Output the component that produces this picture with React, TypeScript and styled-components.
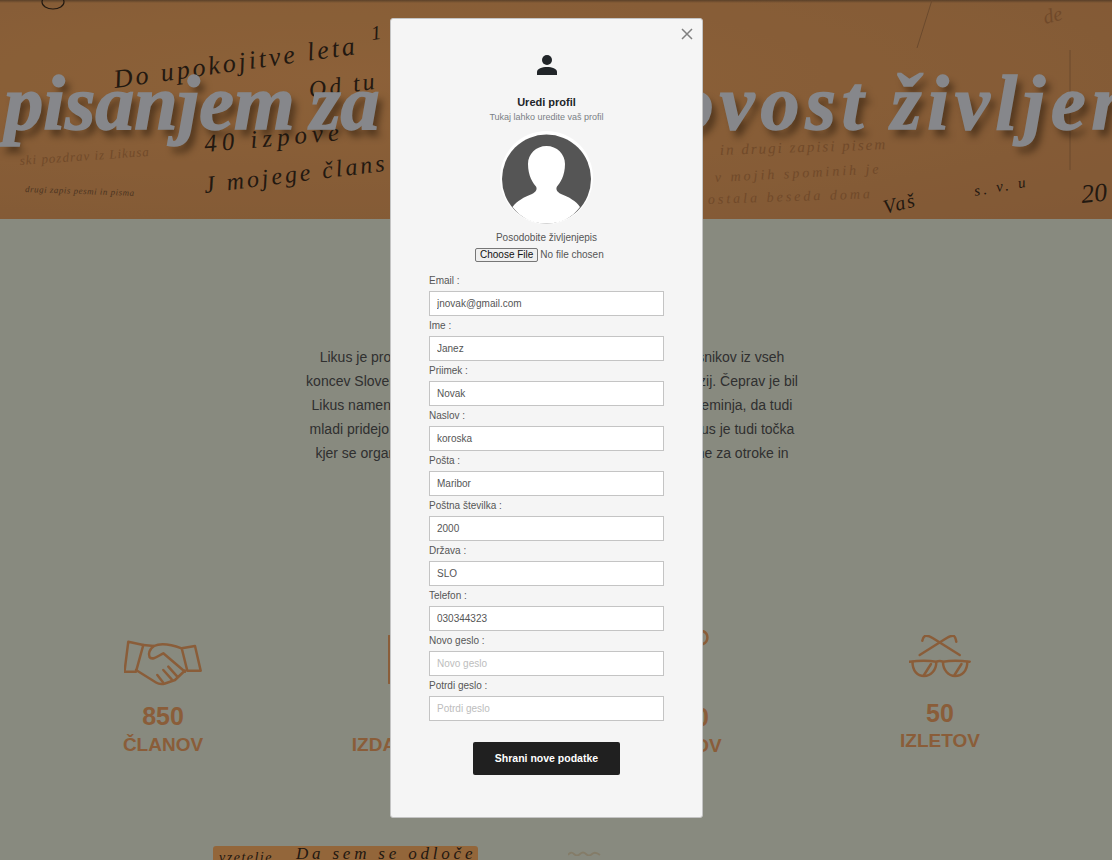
import React from "react";
import styled, { createGlobalStyle } from "styled-components";

const Global = createGlobalStyle`
  html, body { margin: 0; padding: 0; height: 860px; overflow: hidden; background: #e3e6d4; }
  * { box-sizing: border-box; }
  body { font-family: "Liberation Sans", Arial, sans-serif; }
`;

const Page = styled.div`
  width: 1112px;
  height: 860px;
  overflow: hidden;
  background: #e3e6d4;
`;

const Banner = styled.header`
  position: relative;
  height: 219px;
  overflow: hidden;
  display: flex;
  justify-content: center;
  background:
    linear-gradient(180deg, rgba(60, 50, 40, 0.45) 0, rgba(60, 50, 40, 0) 3px),
    radial-gradient(ellipse at 30% 35%, #eaa25f 0, #e29c5c 45%, #d8945a 100%);
`;

const Scribbles = styled.svg`
  position: absolute;
  inset: 0;
  width: 100%;
  height: 100%;
`;

const Slogan = styled.h1`
  position: relative;
  flex: none;
  margin: 58px 0 0 47px;
  font-family: "Liberation Serif", serif;
  font-style: italic;
  font-weight: 700;
  font-size: 78px;
  line-height: 90px;
  word-spacing: -4px;
  white-space: nowrap;
  color: #dfe2e8;
  -webkit-text-stroke: 1.5px #dfe2e8;
  text-shadow: 5px 7px 7px rgba(50, 30, 10, 0.5);
`;

const SloganWide = styled.span`
  letter-spacing: 6px;
`;

const Intro = styled.section`
  padding: 126px 8px 0 0;
  text-align: center;
  font-size: 14px;
  line-height: 24px;
  color: #505050;
`;

const Line = styled.div`
  white-space: nowrap;
`;

const Stats = styled.section`
  display: flex;
  align-items: flex-start;
  margin-top: 165px;
  padding-left: 33.5px;
`;

const Stat = styled.div<{ $top: number }>`
  flex: none;
  width: 259px;
  margin-top: ${(p) => p.$top}px;
  display: flex;
  flex-direction: column;
  align-items: center;
  color: #e69c60;
`;

const StatIcon = styled.svg`
  display: block;
  fill: none;
  stroke: #e69c60;
  stroke-width: 2.5;
  stroke-linecap: round;
  stroke-linejoin: round;
`;

const StatNumber = styled.div<{ $gap: number }>`
  margin-top: ${(p) => p.$gap}px;
  font-size: 25px;
  line-height: 30px;
  font-weight: 700;
`;

const StatLabel = styled.div<{ $gap?: number }>`
  margin-top: ${(p) => p.$gap ?? 3}px;
  font-size: 19px;
  line-height: 22px;
  font-weight: 700;
`;

const Bottom = styled.section`
  display: flex;
  align-items: flex-start;
  margin-top: 89px;
  padding-left: 213px;
`;

const Tile = styled.div`
  width: 265px;
  height: 60px;
  border-radius: 3px;
  overflow: hidden;
  background: #f5aa62;
`;

const TileArt = styled.svg`
  display: block;
`;

const Squiggle = styled.svg`
  display: block;
  margin: 5px 0 0 90px;
  fill: none;
  stroke: #dccfae;
  stroke-width: 1.8;
`;

const Backdrop = styled.div`
  position: fixed;
  inset: 0;
  display: flex;
  justify-content: center;
  align-items: flex-start;
  padding: 18px 19px 0 0;
  background: rgba(0, 0, 0, 0.4);
`;

const Modal = styled.div`
  position: relative;
  width: 313px;
  height: 800px;
  display: flex;
  flex-direction: column;
  align-items: center;
  padding-top: 36px;
  background: #f5f5f5;
  border: 1px solid #c4c4c4;
  border-radius: 3px;
`;

const Close = styled.button`
  position: absolute;
  top: 8px;
  right: 8px;
  width: 14px;
  height: 14px;
  padding: 0;
  border: 0;
  background: none;
  color: #808080;
  display: flex;
`;

const TitleIcon = styled.svg`
  display: block;
  fill: #212529;
`;

const Title = styled.h2`
  margin: 20px 0 0;
  font-size: 11px;
  line-height: 14px;
  font-weight: 700;
  color: #212529;
`;

const Subtitle = styled.p`
  margin: 2px 0 0;
  font-size: 9px;
  line-height: 13px;
  color: #7a7f85;
`;

const Avatar = styled.svg`
  display: block;
  margin-top: 7px;
`;

const ResumeLabel = styled.div`
  margin-top: 7px;
  font-size: 10px;
  line-height: 13px;
  color: #555;
`;

const FileInput = styled.input`
  display: block;
  width: 143px;
  margin: 4px 0 0 0;
  padding: 0;
  font-family: "Liberation Sans", Arial, sans-serif;
  font-size: 10px;
  line-height: 12px;
  color: #555;
  &::file-selector-button {
    font: inherit;
    color: #111;
    margin-right: 2px;
    padding: 0 4px;
    height: 14px;
    background: #efefef;
    border: 1px solid #767676;
    border-radius: 2px;
  }
`;

const Form = styled.form`
  width: 235px;
  margin-top: 9px;
  display: flex;
  flex-direction: column;
  align-items: stretch;
`;

const Label = styled.label`
  display: block;
  height: 20px;
  font-size: 10px;
  line-height: 20px;
  color: #555;
`;

const Input = styled.input`
  display: block;
  width: 100%;
  height: 25px;
  padding: 0 7px;
  font-family: "Liberation Sans", Arial, sans-serif;
  font-size: 10px;
  color: #555;
  background: #fff;
  border: 1px solid #c4c4c4;
  border-radius: 0;
  outline: none;
  &::placeholder {
    color: #bdbdbd;
    opacity: 1;
  }
`;

const Save = styled.button`
  align-self: center;
  width: 147px;
  height: 33px;
  margin-top: 21px;
  padding: 0 0 2px;
  font-family: "Liberation Sans", Arial, sans-serif;
  font-size: 10.5px;
  font-weight: 700;
  color: #fff;
  background: #202020;
  border: 0;
  border-radius: 2px;
`;

const fields = [
  { label: "Email :", value: "jnovak@gmail.com" },
  { label: "Ime :", value: "Janez" },
  { label: "Priimek :", value: "Novak" },
  { label: "Naslov :", value: "koroska" },
  { label: "Pošta :", value: "Maribor" },
  { label: "Poštna številka :", value: "2000" },
  { label: "Država :", value: "SLO" },
  { label: "Telefon :", value: "030344323" },
  { label: "Novo geslo :", placeholder: "Novo geslo" },
  { label: "Potrdi geslo :", placeholder: "Potrdi geslo" },
];

const inkDark = { fontFamily: "'Liberation Serif', serif", fontStyle: "italic", fill: "#3a2a1c" } as const;
const inkFaint = { fontFamily: "'Liberation Serif', serif", fontStyle: "italic", fill: "#b0713f", opacity: 0.75 } as const;

export default function App() {
  return (
    <>
      <Global />
      <Page>
        <Banner>
          <Scribbles viewBox="0 0 1112 219">
            <text {...inkDark} fontSize="26" transform="translate(115 88) rotate(-8)" letterSpacing="3">Do upokojitve leta</text>
            <text {...inkDark} fontSize="24" transform="translate(310 98) rotate(-8)" letterSpacing="3">Od tu</text>
            <text {...inkDark} fontSize="25" transform="translate(205 152) rotate(-5)" letterSpacing="5">40 izpove</text>
            <text {...inkDark} fontSize="24" transform="translate(205 193) rotate(-7)" letterSpacing="3">J mojege člans</text>
            <text {...inkDark} fontSize="20" transform="translate(372 40) rotate(-8)">1</text>
            <text {...inkFaint} fontSize="13" transform="translate(20 165) rotate(-4)" letterSpacing="1">ski pozdrav iz Likusa</text>
            <text {...inkDark} fontSize="9" opacity="0.6" transform="translate(25 192) rotate(2)" letterSpacing="0.5">drugi zapis pesmi in pisma</text>
            <text {...inkFaint} fontSize="15" transform="translate(720 155) rotate(-2)" letterSpacing="2">in drugi zapisi pisem</text>
            <text {...inkFaint} fontSize="14" transform="translate(715 182) rotate(-3)" letterSpacing="3">v mojih spominih je</text>
            <text {...inkFaint} fontSize="14" transform="translate(708 204) rotate(-2)" letterSpacing="3">ostala beseda doma</text>
            <text {...inkDark} fontSize="20" transform="translate(885 214) rotate(-14)" letterSpacing="2">Vaš</text>
            <text {...inkDark} fontSize="15" transform="translate(975 196) rotate(-10)" letterSpacing="3">s. v. u</text>
            <text {...inkDark} fontSize="26" transform="translate(1082 203) rotate(-6)">20</text>
            <text {...inkFaint} fontSize="20" transform="translate(1045 24) rotate(-14)">de</text>
            <path d="M1070 50V170M932 0L917 48" stroke="#b27b4c" strokeWidth="1" fill="none" />
            <ellipse cx="53" cy="2" rx="11" ry="7" fill="none" stroke="#3a2a1c" strokeWidth="1.2" />
          </Scribbles>
          <Slogan>
            S pisanjem za višjo kak<SloganWide>ovost življenja</SloganWide>
          </Slogan>
        </Banner>

        <Intro>
          <Line>Likus je prostovoljno združenje literarnih ustvarjalcev ter dopisnikov iz vseh</Line>
          <Line>koncev Slovenije, ki se srečujejo na srečanjih in skupnih ekskurzij. Čeprav je bil</Line>
          <Line>Likus namenjen predvsem starim, pa se ta slika v tem času spreminja, da tudi</Line>
          <Line>mladi pridejo med nas in podelijo svoje izkušnje s pisanjem. Likus je tudi točka</Line>
          <Line>kjer se organizirajo literarni večeri in pisne delavnice namenjene za otroke in</Line>
        </Intro>

        <Stats>
          <Stat $top={10}>
            <StatIcon width="78" height="47" viewBox="0 0 78 47">
              <path d="M4.3 1.7L19.3 5L12 31.7H0.5Z" />
              <path d="M57.7 8.3L71 6L76.7 30.7H63.3Z" />
              <path d="M19.3 5L30 6Q39 1.5 57.7 8.3" />
              <path d="M12 30L32 42.5Q36 45 41 43.5L51 40L61 30.5" />
              <path d="M30 6C25.5 9 24 14 25.5 17C28 21 34 16 39.3 13.3L61 31.7" />
              <path d="M33.3 35L39.3 42.7M39.3 30L47.7 39.3M44.3 26.7L53.3 36.7" />
            </StatIcon>
            <StatNumber $gap={14}>850</StatNumber>
            <StatLabel>ČLANOV</StatLabel>
          </Stat>
          <Stat $top={5}>
            <StatIcon width="68" height="49" viewBox="0 0 68 49">
              <path d="M1.2 1V48H66V1" />
              <path d="M34 6V48" />
            </StatIcon>
            <StatNumber $gap={17}>120</StatNumber>
            <StatLabel>IZDANIH KNJIG</StatLabel>
          </Stat>
          <Stat $top={0}>
            <StatIcon width="56" height="50" viewBox="0 0 56 50">
              <path d="M50 1A7 7 0 0 1 50 14" />
              <path d="M10 14H48V48H10Z" />
            </StatIcon>
            <StatNumber $gap={22}>1200</StatNumber>
            <StatLabel>PESMOV</StatLabel>
          </Stat>
          <Stat $top={5}>
            <StatIcon width="62" height="43" viewBox="0 0 62 43">
              <path d="M13.3 5.7C14 2.5 15.5 0.7 17.3 0.7C19.5 0.7 22 2 24 3.3L50.7 20" />
              <path d="M47.3 6.7C46.5 2.5 45.5 0.7 44 0.7C41.5 0.7 39.5 2 37.3 3.3L10.7 20" />
              <path d="M0.5 26.7C10 25.5 20 25.5 27.3 26.7C29.5 25.8 32 25.8 34 26.7C41 25.5 51 25.5 60.7 26.7" />
              <path d="M3.5 27C3.5 36 8.5 41 15 41C22 41 27.3 35 27.3 27" />
              <path d="M34 27C34 35 39.5 41 46 41C53 41 58.3 36 58.3 27" />
              <path d="M22 29L15 40M52.5 29L45.5 40" />
            </StatIcon>
            <StatNumber $gap={20}>50</StatNumber>
            <StatLabel $gap={2}>IZLETOV</StatLabel>
          </Stat>
        </Stats>

        <Bottom>
          <Tile>
            <TileArt width="265" height="60" viewBox="0 0 265 60">
              <text {...inkDark} fontSize="14" x="6" y="16" letterSpacing="1.5">vzetelje</text>
              <text {...inkDark} fontSize="17" x="83" y="13" letterSpacing="3.8">Da sem se odloče</text>
            </TileArt>
          </Tile>
          <Squiggle width="33" height="5" viewBox="0 0 33 5">
            <path d="M0 4Q3 0 6 3T12 3T18 3T24 3T32 4" />
          </Squiggle>
        </Bottom>
      </Page>

      <Backdrop>
        <Modal>
          <Close type="button" aria-label="Zapri">
            <svg width="14" height="14" viewBox="0 0 14 14" fill="none" stroke="currentColor" strokeWidth="1.5">
              <path d="M2 2L12 12M12 2L2 12" />
            </svg>
          </Close>
          <TitleIcon width="20" height="20" viewBox="0 0 20 20">
            <circle cx="10" cy="5" r="5" />
            <path d="M0 20V17C0 13.5 5 12 10 12C15 12 20 13.5 20 17V20Z" />
          </TitleIcon>
          <Title>Uredi profil</Title>
          <Subtitle>Tukaj lahko uredite vaš profil</Subtitle>
          <Avatar width="93" height="93" viewBox="0 0 93 93">
            <circle cx="46.5" cy="46.5" r="46.5" fill="#fff" />
            <circle cx="46.5" cy="48" r="44.5" fill="#555" />
            <path d="M46.5 15C36 15 28 23 28 33C28 45 33 52 36 55.5C37.5 58 36 61 32 63C24 66 17 70 12.5 76C21 87 32 92.5 46.5 92.5C61 92.5 72 87 80 76C76 70 69 66 61 63C57 61 55.5 58 57 55.5C60 52 65 45 65 33C65 23 57 15 46.5 15Z" fill="#fff" />
          </Avatar>
          <ResumeLabel>Posodobite življenjepis</ResumeLabel>
          <FileInput type="file" />
          <Form onSubmit={(e) => e.preventDefault()}>
            {fields.map((f) => (
              <div key={f.label}>
                <Label>{f.label}</Label>
                <Input defaultValue={f.value} placeholder={f.placeholder} />
              </div>
            ))}
            <Save type="submit">Shrani nove podatke</Save>
          </Form>
        </Modal>
      </Backdrop>
    </>
  );
}
